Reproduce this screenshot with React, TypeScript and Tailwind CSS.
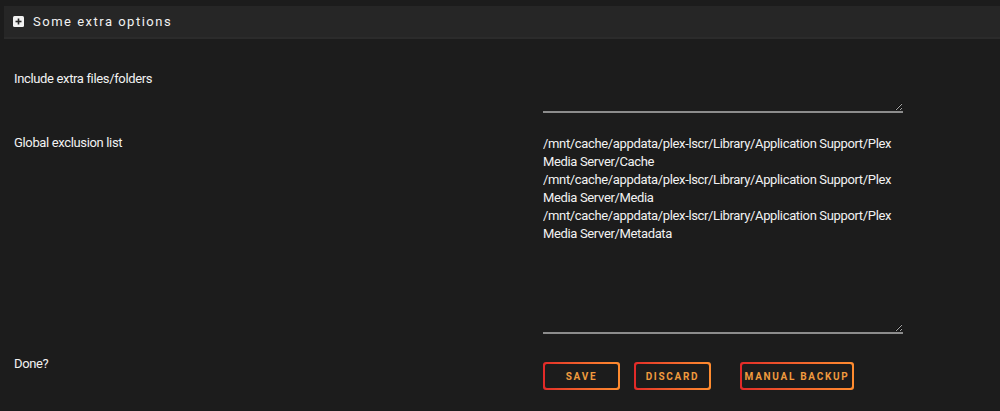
import type { ReactNode } from 'react';

const FONT = { fontFamily: 'Roboto, "Noto Sans", Arial, sans-serif' };

const exclusions = [
  '/mnt/cache/appdata/plex-lscr/Library/Application Support/Plex Media Server/Cache',
  '/mnt/cache/appdata/plex-lscr/Library/Application Support/Plex Media Server/Media',
  '/mnt/cache/appdata/plex-lscr/Library/Application Support/Plex Media Server/Metadata',
].join('\n');

function Row({ label, children, className = '' }: { label: string; children: ReactNode; className?: string }) {
  return (
    <div className={`flex ${className}`}>
      <div className="w-[529px] shrink-0 text-[13px] leading-[18px] tracking-[-0.35px] text-[#f2f2f2]">{label}</div>
      <div className="flex-1">{children}</div>
    </div>
  );
}

function OrangeButton({ label, width }: { label: string; width: string }) {
  return (
    <button className={`${width} h-[28px] rounded-[3px] bg-linear-to-r from-[#e22828] to-[#ff8c2f] p-[2px]`}>
      <span className="flex h-full w-full items-center justify-center whitespace-nowrap rounded-[2px] bg-[#1c1c1c] text-[10px] font-bold tracking-[1.7px] text-[#f09a3e]">
        {label}
      </span>
    </button>
  );
}

export default function App() {
  return (
    <div className="min-h-[411px] bg-[#1c1c1c] pt-[6px]" style={FONT}>
      {/* section header */}
      <div className="ml-[4px] flex h-[33px] items-center gap-[9px] border-b-[2px] border-[#2b2b2b] bg-[#262626] pl-[9px]">
        <svg width="11" height="11" viewBox="0 0 11 11">
          <rect x="0" y="0" width="11" height="11" rx="1.5" fill="#f2f2f2" />
          <rect x="2.5" y="4.7" width="6" height="1.6" fill="#262626" />
          <rect x="4.7" y="2.5" width="1.6" height="6" fill="#262626" />
        </svg>
        <span className="text-[13px] tracking-[1.5px] text-[#f2f2f2]">Some extra options</span>
      </div>

      <div className="pl-[14px] pt-[31px]">
        <Row label="Include extra files/folders">
          <textarea
            className="-mt-[3px] block h-[46px] w-[360px] resize-y border-0 border-b-[2px] border-[#8c8c8c] bg-transparent text-[13px] leading-[18px] tracking-[-0.35px] text-[#f2f2f2] outline-none"
            style={FONT}
          />
        </Row>

        <Row label="Global exclusion list" className="mt-[21px]">
          <textarea
            className="-mt-[4px] block h-[204px] w-[360px] resize-y border-0 border-b-[2px] border-[#8c8c8c] bg-transparent pt-[5px] text-[13px] leading-[18px] tracking-[-0.35px] text-[#f2f2f2] outline-none"
            style={FONT}
            defaultValue={exclusions}
          />
        </Row>

        <Row label="Done?" className="mt-[21px]">
          <div className="mt-[7px] flex">
            <OrangeButton label="SAVE" width="w-[77px]" />
            <div className="ml-[14px]">
              <OrangeButton label="DISCARD" width="w-[77px]" />
            </div>
            <div className="ml-[29px]">
              <OrangeButton label="MANUAL BACKUP" width="w-[114px]" />
            </div>
          </div>
        </Row>
      </div>
    </div>
  );
}
